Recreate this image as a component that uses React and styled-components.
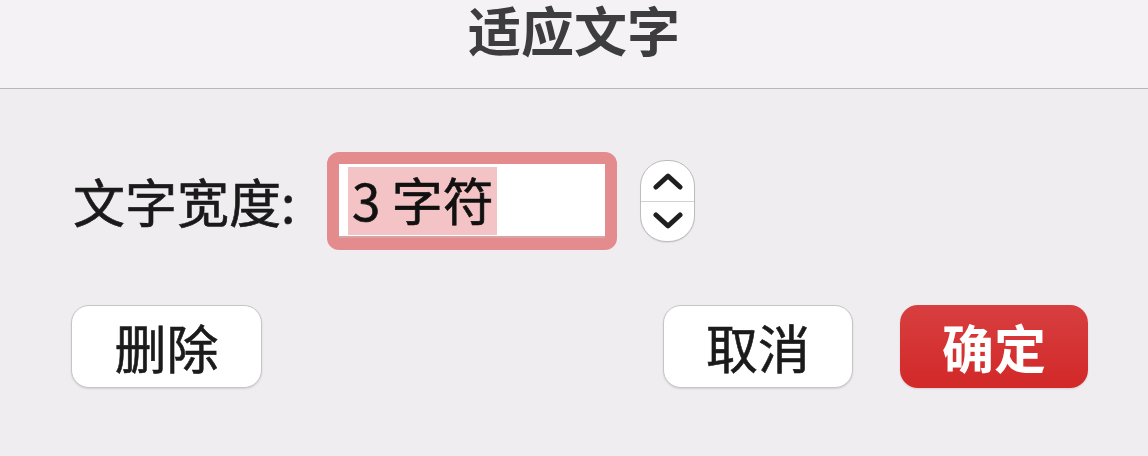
import React, { useState } from "react";
import styled, { createGlobalStyle } from "styled-components";

const GlobalStyle = createGlobalStyle`
  html, body {
    margin: 0;
    padding: 0;
    background: #efedf0;
  }
  body {
    font-family: "Noto Sans CJK SC", "Noto Sans", sans-serif;
  }
`;

const Dialog = styled.div`
  width: 1148px;
  height: 456px;
  overflow: hidden;
  background: #efedf0;
  display: flex;
  flex-direction: column;
`;

const Header = styled.header`
  height: 89px;
  background: #f5f2f5;
  border-bottom: 1px solid #b8b6b8;
  display: flex;
  justify-content: center;
  align-items: flex-start;
  box-sizing: border-box;
`;

const Title = styled.h1`
  margin: 0;
  font-size: 53px;
  line-height: 58px;
  font-weight: 700;
  color: #3d3c3e;
`;

const Body = styled.div`
  display: flex;
  flex-direction: column;
  padding-top: 63px;
`;

const FieldRow = styled.div`
  display: flex;
  align-items: center;
  padding-left: 73px;
`;

const Label = styled.label`
  flex: 0 0 254px;
  font-size: 52px;
  line-height: 1;
  color: #1a1a1a;
  -webkit-text-stroke: 0.6px #1a1a1a;
`;

const FocusRing = styled.div`
  width: 290px;
  height: 98px;
  box-sizing: border-box;
  padding: 12px;
  border-radius: 12px;
  background: #e48b8d;
`;

const Field = styled.div`
  height: 100%;
  background: #fff;
  box-shadow: inset 0 -2px 0 #d9a3a5;
  padding: 3px 9px;
  box-sizing: border-box;
  display: flex;
  align-items: stretch;
`;

const Selection = styled.span`
  background: #f4c3c5;
  padding: 0 3px 0 4px;
  font-size: 51px;
  line-height: 64px;
  color: #111;
  -webkit-text-stroke: 0.6px #111;
`;

const Stepper = styled.div`
  margin-left: 23px;
  width: 55px;
  height: 82px;
  box-sizing: border-box;
  border: 1px solid #bdbbbd;
  border-radius: 26px;
  background: #fff;
  display: flex;
  flex-direction: column;
  overflow: hidden;
  box-shadow: 0 1px 1px rgba(0, 0, 0, 0.08);
`;

const StepButton = styled.button`
  flex: 1;
  border: none;
  background: transparent;
  padding: 0;
  display: flex;
  align-items: center;
  justify-content: center;
  cursor: pointer;
  border-top: ${(p) => (p.$divider ? "1px solid #d2d0d2" : "none")};
`;

const ButtonRow = styled.div`
  display: flex;
  align-items: center;
  padding: 0 60px 0 71px;
  margin-top: 55px;
`;

const Spacer = styled.div`
  flex: 1;
`;

const Button = styled.button`
  width: ${(p) => p.$width}px;
  height: 83px;
  margin-left: ${(p) => p.$gap || 0}px;
  border-radius: 18px;
  box-sizing: border-box;
  font-family: inherit;
  font-size: 52px;
  line-height: 1;
  padding: 0;
  cursor: pointer;
  border: ${(p) => (p.$primary ? "none" : "1px solid #c6c4c6")};
  background: ${(p) =>
    p.$primary ? "linear-gradient(#d83f40, #d22828)" : "#ffffff"};
  color: ${(p) => (p.$primary ? "#ffffff" : "#1b1b1b")};
  font-weight: ${(p) => (p.$primary ? 700 : 400)};
  -webkit-text-stroke: ${(p) => (p.$primary ? "0" : "0.6px #1b1b1b")};
  box-shadow: 0 1px 2px rgba(0, 0, 0, 0.12);
`;

const Chevron = ({ up }) => (
  <svg width="30" height="20" viewBox="0 0 30 20">
    <path
      d={up ? "M3 16 L15 5 L27 16" : "M3 4 L15 15 L27 4"}
      fill="none"
      stroke="#1f1f1f"
      strokeWidth="5"
      strokeLinecap="round"
      strokeLinejoin="round"
    />
  </svg>
);

const App = () => {
  const [width, setWidth] = useState(3);

  return (
    <Dialog>
      <GlobalStyle />
      <Header>
        <Title>适应文字</Title>
      </Header>
      <Body>
        <FieldRow>
          <Label>文字宽度:</Label>
          <FocusRing>
            <Field>
              <Selection>{width} 字符</Selection>
            </Field>
          </FocusRing>
          <Stepper>
            <StepButton onClick={() => setWidth(width + 1)}>
              <Chevron up />
            </StepButton>
            <StepButton $divider onClick={() => setWidth(Math.max(1, width - 1))}>
              <Chevron />
            </StepButton>
          </Stepper>
        </FieldRow>
        <ButtonRow>
          <Button $width={191}>删除</Button>
          <Spacer />
          <Button $width={190}>取消</Button>
          <Button $width={188} $gap={47} $primary>
            确定
          </Button>
        </ButtonRow>
      </Body>
    </Dialog>
  );
};

export default App;
